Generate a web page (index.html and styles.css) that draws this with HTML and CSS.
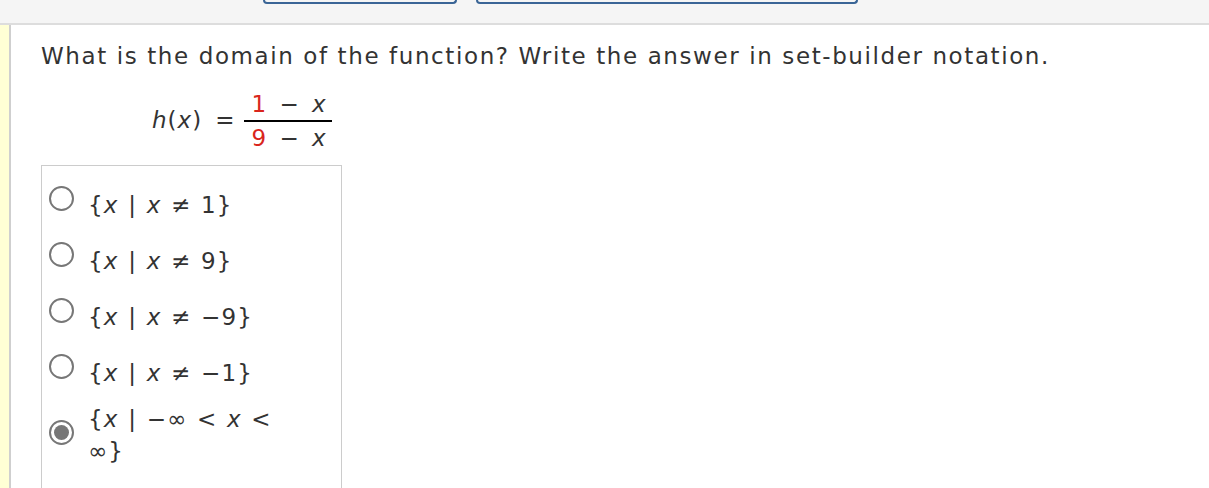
FILE: index.html
```html
<!DOCTYPE html>
<html>
<head>
<meta charset="utf-8">
<link rel="stylesheet" href="styles.css">
</head>
<body>
<div class="topbar">
  <div class="btn btn1"></div>
  <div class="btn btn2"></div>
</div>
<div class="main">
  <div class="strip"></div>
  <div class="content">
    <p class="question">What is the domain of the function? Write the answer in set-builder notation.</p>
    <div class="formula">
      <span class="lhs"><i>h</i>(<i>x</i>)</span>
      <span class="eq">=</span>
      <span class="frac">
        <span class="num"><span class="red">1</span> − <i>x</i></span>
        <span class="den"><span class="red">9</span> − <i>x</i></span>
      </span>
    </div>
    <div class="options">
      <div class="opt"><span class="radio"></span><span class="label">{<i>x</i> | <i>x</i> ≠ 1}</span></div>
      <div class="opt"><span class="radio"></span><span class="label">{<i>x</i> | <i>x</i> ≠ 9}</span></div>
      <div class="opt"><span class="radio"></span><span class="label">{<i>x</i> | <i>x</i> ≠ −9}</span></div>
      <div class="opt"><span class="radio"></span><span class="label">{<i>x</i> | <i>x</i> ≠ −1}</span></div>
      <div class="opt sel"><span class="radio checked"></span><span class="label">{<i>x</i> | −∞ &lt; <i>x</i> &lt;<br>∞}</span></div>
    </div>
  </div>
</div>
</body>
</html>
```
FILE: styles.css
```css
html, body {
  margin: 0;
  padding: 0;
  background: #fff;
  font-family: "DejaVu Sans", Verdana, sans-serif;
  color: #333;
  overflow: hidden;
}
.topbar {
  height: 23px;
  background: #f5f5f5;
  border-bottom: 2px solid #ddd;
  display: flex;
  align-items: flex-start;
}
.btn {
  border: 2px solid #3a6596;
  border-top: none;
  border-radius: 0 0 6px 6px;
  height: 2px;
}
.btn1 {
  margin-left: 263px;
  width: 190px;
}
.btn2 {
  margin-left: 19px;
  width: 378px;
}
.main {
  display: flex;
  min-height: 470px;
}
.strip {
  width: 9px;
  background: #ffffd5;
  border-right: 2px solid #cfcfcf;
  flex: none;
}
.content {
  padding-left: 29px;
  flex: 1;
}
.question {
  font-size: 23px;
  margin: 18px 0 0 1px;
  line-height: 26px;
  letter-spacing: 1.6px;
  white-space: nowrap;
}
.formula {
  display: flex;
  align-items: center;
  font-size: 23px;
  letter-spacing: 1px;
  margin: 16px 0 0 112px;
  height: 70px;
}
.lhs {
  margin-right: 13px;
}
.eq {
  margin-right: 9px;
}
.frac {
  display: flex;
  flex-direction: column;
  align-items: center;
  word-spacing: 4px;
  margin-top: 2px;
}
.num {
  padding: 0 5px 1px 7px;
  border-bottom: 2px solid #000;
  line-height: 30px;
}
.den {
  padding: 1px 5px 0 7px;
  line-height: 30px;
}
.red {
  color: #d9261c;
}
.options {
  margin: 10px 0 0 1px;
  width: 299px;
  border: 1px solid #ccc;
  border-bottom: none;
  padding-top: 13px;
  height: 340px;
}
.opt {
  display: flex;
  align-items: flex-start;
  height: 56px;
  font-size: 23px;
  letter-spacing: 1.2px;
  word-spacing: 1px;
}
.opt .radio {
  flex: none;
  width: 21px;
  height: 21px;
  border: 2px solid #777;
  border-radius: 50%;
  margin: 7px 0 0 7px;
  box-sizing: content-box;
  position: relative;
}
.opt .radio.checked::after {
  content: "";
  position: absolute;
  left: 3px;
  top: 3px;
  width: 15px;
  height: 15px;
  border-radius: 50%;
  background: #777;
}
.opt.sel .radio {
  margin-top: 17px;
}
.label {
  margin-left: 14px;
  margin-top: 10px;
  line-height: 32px;
}
.opt.sel .label {
  margin-top: 0;
}
```
